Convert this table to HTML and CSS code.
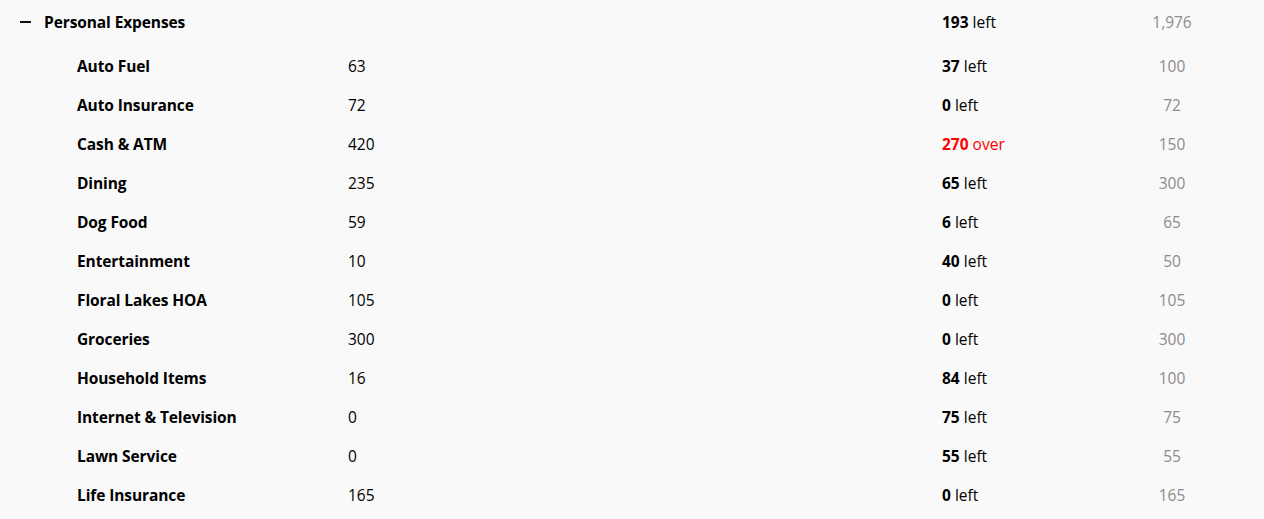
FILE: index.html
```html
<!DOCTYPE html>
<html>
<head>
<meta charset="utf-8">
<link rel="stylesheet" href="styles.css">
</head>
<body>
<div class="budget">
  <div class="group-row">
    <span class="toggle"><span class="toggle-bar"></span></span>
    <span class="group-name">Personal Expenses</span>
    <span class="remain"><b>193</b> left</span>
    <span class="total">1,976</span>
  </div>
  <div class="row"><span class="name">Auto Fuel</span><span class="spent">63</span><span class="remain"><b>37</b> left</span><span class="total">100</span></div>
  <div class="row"><span class="name">Auto Insurance</span><span class="spent">72</span><span class="remain"><b>0</b> left</span><span class="total">72</span></div>
  <div class="row"><span class="name">Cash &amp; ATM</span><span class="spent">420</span><span class="remain over"><b>270</b> over</span><span class="total">150</span></div>
  <div class="row"><span class="name">Dining</span><span class="spent">235</span><span class="remain"><b>65</b> left</span><span class="total">300</span></div>
  <div class="row"><span class="name">Dog Food</span><span class="spent">59</span><span class="remain"><b>6</b> left</span><span class="total">65</span></div>
  <div class="row"><span class="name">Entertainment</span><span class="spent">10</span><span class="remain"><b>40</b> left</span><span class="total">50</span></div>
  <div class="row"><span class="name">Floral Lakes HOA</span><span class="spent">105</span><span class="remain"><b>0</b> left</span><span class="total">105</span></div>
  <div class="row"><span class="name">Groceries</span><span class="spent">300</span><span class="remain"><b>0</b> left</span><span class="total">300</span></div>
  <div class="row"><span class="name">Household Items</span><span class="spent">16</span><span class="remain"><b>84</b> left</span><span class="total">100</span></div>
  <div class="row"><span class="name">Internet &amp; Television</span><span class="spent">0</span><span class="remain"><b>75</b> left</span><span class="total">75</span></div>
  <div class="row"><span class="name">Lawn Service</span><span class="spent">0</span><span class="remain"><b>55</b> left</span><span class="total">55</span></div>
  <div class="row"><span class="name">Life Insurance</span><span class="spent">165</span><span class="remain"><b>0</b> left</span><span class="total">165</span></div>
</div>
</body>
</html>
```
FILE: styles.css
```css
html, body {
  margin: 0;
  padding: 0;
  background: #f9f9f9;
}
body {
  font-family: "Open Sans", "Noto Sans", "Liberation Sans", sans-serif;
  font-size: 15.5px;
  color: #000;
  height: 519px;
  overflow: hidden;
}
.budget {
  display: flex;
  flex-direction: column;
}
.group-row, .row {
  display: grid;
  grid-template-columns: 348px 594px 190px 80px;
  align-items: center;
}
.group-row {
  box-sizing: border-box;
  height: 46px;
  padding-bottom: 3px;
  grid-template-columns: 44px 898px 190px 80px;
}
.row {
  height: 39px;
}
.toggle {
  display: flex;
  align-items: center;
  padding-left: 20px;
}
.toggle-bar {
  width: 11px;
  height: 2px;
  background: #111;
}
.group-name {
  font-weight: 700;
  font-size: 15.5px;
  letter-spacing: -0.1px;
}
.name {
  padding-left: 77px;
  font-weight: 700;
  letter-spacing: -0.1px;
}
.remain b {
  font-weight: 700;
}
.remain.over {
  color: #ff0000;
}
.total {
  color: #8c8c8c;
  text-align: center;
}
```
